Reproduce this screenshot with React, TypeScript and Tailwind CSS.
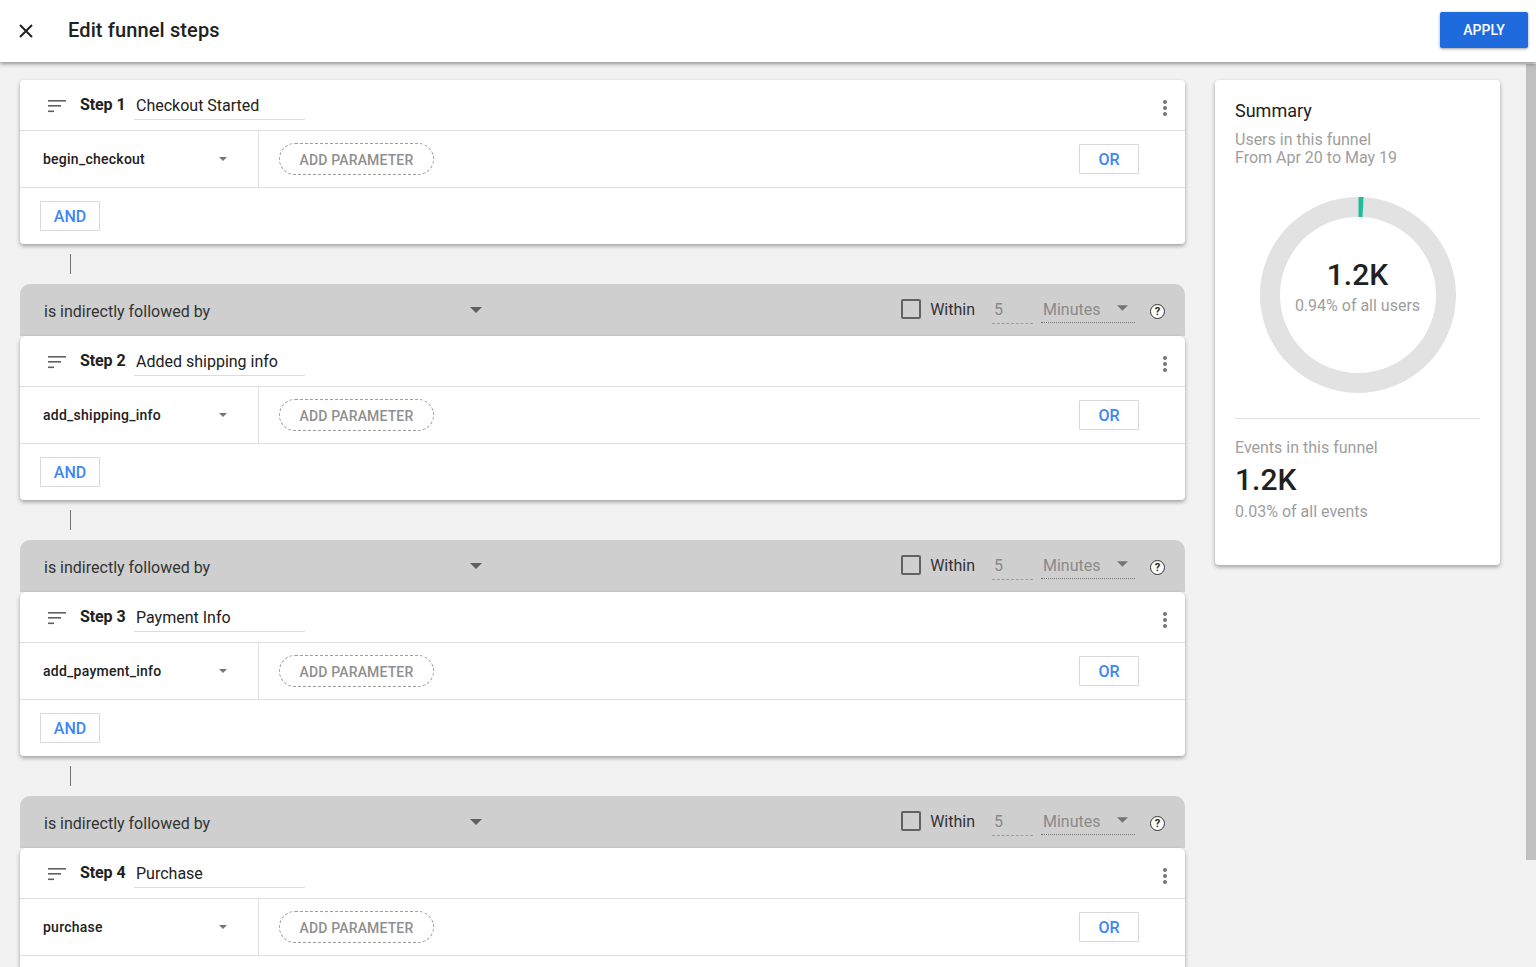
const steps = [
  { label: "Step 1", name: "Checkout Started", event: "begin_checkout" },
  { label: "Step 2", name: "Added shipping info", event: "add_shipping_info" },
  { label: "Step 3", name: "Payment Info", event: "add_payment_info" },
  { label: "Step 4", name: "Purchase", event: "purchase" },
];

function Caret({ className }: { className: string }) {
  return (
    <svg className={className} viewBox="0 0 10 5" fill="currentColor">
      <path d="M0 0h10L5 5z" />
    </svg>
  );
}

function StepCard({ step, first }: { step: (typeof steps)[number]; first: boolean }) {
  return (
    <div
      className={`bg-white rounded-[4px] shadow-[0_2px_4px_rgba(0,0,0,0.35)] ${first ? "" : "rounded-t-[6px]"}`}
    >
      <div className="h-[51px] flex items-center border-b border-[#dcdcdc] relative">
        <svg className="ml-[28px] w-[18px] h-[14px] shrink-0 text-[#616161] mt-[2px]" viewBox="0 0 18 14" fill="currentColor">
          <rect x="0" y="1" width="18" height="1.6" />
          <rect x="0" y="6" width="13" height="1.6" />
          <rect x="0" y="11.5" width="6" height="1.6" />
        </svg>
        <span className="ml-[14px] w-[54px] text-[16px] font-bold text-[#212121] -mt-[1px] tracking-[-0.1px]">{step.label}</span>
        <div className="h-[29px] w-[171px] border-b border-[#dcdcdc] pl-[2px] pt-[2px] flex items-center text-[16px] text-[#212121] mt-[1px]">
          {step.name}
        </div>
        <div className="ml-auto mr-[18px] flex flex-col gap-[2px] mt-[5px]">
          <span className="w-[4px] h-[4px] rounded-full bg-[#757575]" />
          <span className="w-[4px] h-[4px] rounded-full bg-[#757575]" />
          <span className="w-[4px] h-[4px] rounded-full bg-[#757575]" />
        </div>
      </div>
      <div className="h-[57px] flex items-stretch border-b border-[#e0e0e0]">
        <div className="w-[239px] shrink-0 border-r border-[#e0e0e0] flex items-center pl-[23px] pr-[31px] justify-between">
          <span className="text-[14px] font-medium text-[#212121] tracking-[0.25px]">{step.event}</span>
          <Caret className="w-[8px] h-[4px] text-[#757575]" />
        </div>
        <div className="flex-1 flex items-center">
          <div className="ml-[20px] w-[155px] h-[32px] pt-[2px] rounded-full border border-dashed border-[#9e9e9e] flex items-center justify-center text-[14px] font-medium text-[#8f8f8f] tracking-[0.15px]">
            ADD PARAMETER
          </div>
          <button className="ml-auto mr-[46px] w-[60px] h-[30px] pt-[2px] border border-[#d8d8d8] rounded-[1px] text-[16px] font-medium text-[#4285f4]">
            OR
          </button>
        </div>
      </div>
      <div className="h-[56px] flex items-center pl-[20px]">
        <button className="w-[60px] h-[30px] pt-[2px] border border-[#d8d8d8] rounded-[1px] text-[16px] font-medium text-[#4285f4] -mt-[1px]">
          AND
        </button>
      </div>
    </div>
  );
}

function FollowedBar() {
  return (
    <div className="h-[52px] bg-[#cfcfcf] rounded-t-[10px] flex items-center pr-[20px]">
      <span className="ml-[24px] w-[426px] text-[16px] text-[#333333] mt-[3px]">is indirectly followed by</span>
      <Caret className="w-[12px] h-[6px] text-[#616161]" />
      <div className="ml-auto flex items-center">
        <span className="w-[20px] h-[20px] border-2 border-[#616161] rounded-[2px] -mt-[2px]" />
        <span className="ml-[9px] text-[16px] text-[#333333] -mt-[1px]">Within</span>
        <div className="ml-[17px] w-[41px] h-[28px] pt-[2px] border-b border-dashed border-[#9e9e9e] text-[16px] text-[#8a8a8a] flex items-center -mt-[1px]">
          <span className="ml-[2px]">5</span>
        </div>
        <div className="ml-[8px] w-[94px] h-[27px] pt-[2px] border-b border-dotted border-[#757575] text-[16px] text-[#8a8a8a] flex items-center justify-between pl-[2px] pr-[7px] -mt-[1px]">
          <span>Minutes</span>
          <Caret className="w-[11px] h-[6px] text-[#757575] -mt-[4px]" />
        </div>
        <span className="ml-[15px] w-[15px] h-[15px] rounded-full bg-white border border-[#333333] flex items-center justify-center text-[11px] font-bold text-[#212121] leading-none mt-[2px]">
          ?
        </span>
      </div>
    </div>
  );
}

function Connector() {
  return (
    <div className="h-[40px] flex items-center pl-[50px]">
      <div className="w-px h-[20px] bg-[#757575]" />
    </div>
  );
}

function Summary() {
  return (
    <div className="w-[285px] h-[485px] shrink-0 bg-white rounded-[4px] shadow-[0_2px_4px_rgba(0,0,0,0.35)] px-[20px] pt-[20px]">
      <div className="text-[18px] leading-[22px] text-[#212121]">Summary</div>
      <div className="mt-[9px] text-[16px] leading-[18px] text-[#9e9e9e]">
        Users in this funnel
        <br />
        From Apr 20 to May 19
      </div>
      <div className="relative mt-[30px] w-[196px] h-[196px] ml-[24.5px]">
        <svg className="w-[196px] h-[196px]" viewBox="0 0 196 196">
          <circle cx="98" cy="98" r="88" fill="none" stroke="#e2e2e2" strokeWidth="20" />
          <path d="M98.5 0 L103.5 0 L102.5 20 L98.5 20 Z" fill="#1fbc9c" />
        </svg>
        <div className="absolute inset-0 flex flex-col items-center">
          <span className="mt-[60px] text-[30px] leading-[36px] font-medium text-[#212121]">1.2K</span>
          <span className="mt-[3px] text-[16px] leading-[20px] text-[#9e9e9e] whitespace-nowrap">0.94% of all users</span>
        </div>
      </div>
      <div className="mt-[25px] border-t border-[#e0e0e0] pt-[19px]">
        <div className="text-[16px] leading-[20px] text-[#9e9e9e]">Events in this funnel</div>
        <div className="mt-[4px] text-[30px] leading-[36px] font-medium text-[#212121]">1.2K</div>
        <div className="mt-[4px] text-[16px] leading-[20px] text-[#9e9e9e]">0.03% of all events</div>
      </div>
    </div>
  );
}

export default function App() {
  return (
    <div className="h-[967px] overflow-hidden flex flex-col bg-[#f2f2f2] font-['Roboto',sans-serif]">
      <header className="relative z-10 h-[62px] shrink-0 bg-white shadow-[0_2px_4px_rgba(0,0,0,0.4)] flex items-center">
        <svg className="ml-[19px] w-[14px] h-[14px] text-[#212121]" viewBox="0 0 14 14" stroke="currentColor" strokeWidth="2" fill="none">
          <path d="M1 1l12 12M13 1L1 13" />
        </svg>
        <h1 className="ml-[35px] text-[20px] font-medium text-[#212121] tracking-[0.13px] -mt-[2px]">Edit funnel steps</h1>
        <button className="ml-auto mr-[8px] w-[88px] h-[36px] -mt-[2px] bg-[#1f6bde] rounded-[2px] shadow-[0_1px_3px_rgba(0,0,0,0.4)] text-[14px] font-medium text-white">
          APPLY
        </button>
      </header>
      <main className="flex items-start flex-1 min-h-0">
        <div className="ml-[20px] mt-[18px] w-[1165px] shrink-0">
          {steps.map((step, i) => (
            <div key={step.label}>
              {i > 0 && <FollowedBar />}
              <div className="relative">
                <StepCard step={step} first={i === 0} />
              </div>
              {i < steps.length - 1 && <Connector />}
            </div>
          ))}
        </div>
        <div className="ml-[30px] mt-[18px]">
          <Summary />
        </div>
        <div className="ml-[26px] mt-[2px] w-[10px] h-[796px] bg-[#c0c0c0]" />
      </main>
    </div>
  );
}
